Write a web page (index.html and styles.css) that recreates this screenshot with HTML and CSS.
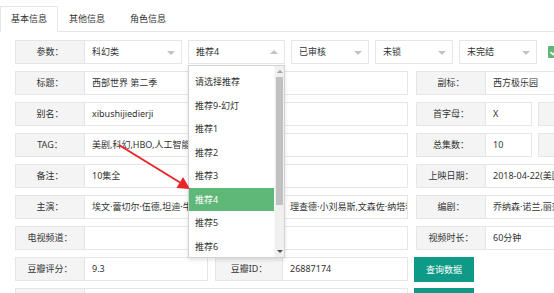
FILE: index.html
```html
<!DOCTYPE html>
<html lang="zh-CN">
<head>
<meta charset="utf-8">
<title>基本信息</title>
<link rel="stylesheet" href="styles.css">
</head>
<body>
<div class="page">
  <div class="tabs">
    <div class="tab active">基本信息</div>
    <div class="tab">其他信息</div>
    <div class="tab tab-wide">角色信息</div>
  </div>

  <div class="form">
    <div class="row">
      <div class="label">参数：</div>
      <div class="select w97 joined">科幻类<i class="caret"></i></div>
      <div class="select w97 open ml6">推荐4<i class="caret up"></i>
        <div class="dropdown">
          <div class="list">
            <div class="item">请选择推荐</div>
            <div class="item">推荐9-幻灯</div>
            <div class="item">推荐1</div>
            <div class="item">推荐2</div>
            <div class="item">推荐3</div>
            <div class="item this">推荐4</div>
            <div class="item">推荐5</div>
            <div class="item">推荐6</div>
            <div class="item">推荐7</div>
          </div>
          <div class="scrollbar">
            <div class="sb-arrow"><i class="sb-up"></i></div>
            <div class="sb-thumb"></div>
            <div class="sb-rest"></div>
            <div class="sb-arrow"><i class="sb-down"></i></div>
          </div>
        </div>
      </div>
      <div class="select w78 ml6">已审核<i class="caret"></i></div>
      <div class="select w78 ml6">未锁<i class="caret"></i></div>
      <div class="select w78 ml6">未完结<i class="caret"></i></div>
      <div class="check">
        <svg viewBox="0 0 12 12" width="12" height="12"><path d="M2.5 6.2 L5 8.5 L9.5 3.5" fill="none" stroke="#fff" stroke-width="1.6"/></svg>
      </div>
    </div>

    <div class="row">
      <div class="label">标题：</div>
      <div class="value w323">西部世界 第二季</div>
      <div class="label ml8">副标：</div>
      <div class="value w120">西方极乐园</div>
    </div>

    <div class="row">
      <div class="label">别名：</div>
      <div class="value w323">xibushijiedierji</div>
      <div class="label ml8">首字母：</div>
      <div class="value w46">X</div>
      <div class="label ml6"></div>
    </div>

    <div class="row">
      <div class="label">TAG：</div>
      <div class="value w323">美剧,科幻,HBO,人工智能,西部</div>
      <div class="label ml8">总集数：</div>
      <div class="value w46">10</div>
      <div class="label ml6"></div>
    </div>

    <div class="row">
      <div class="label">备注：</div>
      <div class="value w323">10集全</div>
      <div class="label ml8">上映日期：</div>
      <div class="value w120">2018-04-22(美国)</div>
    </div>

    <div class="row">
      <div class="label">主演：</div>
      <div class="value w123">埃文·蕾切尔·伍德,坦迪·牛顿,杰弗里·怀特</div>
      <div class="label w68 ml7">导演：</div>
      <div class="value w125">理查德·小刘易斯,文森佐·纳塔利,乔纳森·诺兰</div>
      <div class="label ml8">编剧：</div>
      <div class="value w120">乔纳森·诺兰,丽莎·乔伊</div>
    </div>

    <div class="row">
      <div class="label">电视频道：</div>
      <div class="value w123"></div>
      <div class="label w68 ml7">地区：</div>
      <div class="value w125"></div>
      <div class="label ml8">视频时长：</div>
      <div class="value w120">60分钟</div>
    </div>

    <div class="row">
      <div class="label">豆瓣评分：</div>
      <div class="value w123">9.3</div>
      <div class="label w68 ml7">豆瓣ID：</div>
      <div class="value w125">26887174</div>
      <div class="btn ml6">查询数据</div>
    </div>

    <div class="row">
      <div class="label"></div>
      <div class="value w323"></div>
      <div class="btn ml6"></div>
    </div>
  </div>

  <svg class="arrow" width="554" height="293" viewBox="0 0 554 293">
    <line x1="119" y1="145" x2="180" y2="182.5" stroke="#e8262a" stroke-width="2"/>
    <polygon points="190,189 176.5,188 183,177" fill="#e8262a"/>
  </svg>
</div>
</body>
</html>
```

FILE: styles.css
```css
* {
  box-sizing: border-box;
  margin: 0;
  padding: 0;
}

html,
body {
  margin: 0;
  background: #fff;
}

body {
  font-family: "Noto Sans", "Noto Sans CJK SC", sans-serif;
  font-size: 9px;
  color: #333;
}

.page {
  position: relative;
  width: 554px;
  height: 293px;
  overflow: hidden;
}

/* tabs */
.tabs {
  display: flex;
  height: 32px;
  padding-top: 6px;
  border-bottom: 1px solid #e6e6e6;
}

.tab {
  width: 58px;
  height: 26px;
  line-height: 24px;
  text-align: center;
  border: 1px solid transparent;
  border-bottom: 0;
  flex-shrink: 0;
}

.tab-wide {
  width: 64px;
}

.tab.active {
  position: relative;
  z-index: 1;
  background: #fff;
  border-color: #e6e6e6;
}

/* form */
.form {
  display: flex;
  flex-direction: column;
  gap: 7px;
  padding: 8px 0 0 15px;
}

.row {
  display: flex;
  height: 24px;
  flex-shrink: 0;
}

.label {
  width: 70px;
  height: 24px;
  line-height: 22px;
  text-align: center;
  border: 1px solid #e6e6e6;
  background: #f4f4f4;
  flex-shrink: 0;
  white-space: nowrap;
}

.value {
  height: 24px;
  line-height: 22px;
  padding-left: 7px;
  border: 1px solid #e6e6e6;
  border-left: 0;
  background: #fff;
  white-space: nowrap;
  overflow: hidden;
  flex-shrink: 0;
}

.w46 { width: 46px; }
.w68 { width: 68px; }
.w78 { width: 78px; }
.w97 { width: 97px; }
.w120 { width: 120px; }
.w123 { width: 123px; }
.w125 { width: 125px; }
.w323 { width: 323px; }

.ml6 { margin-left: 6px; }
.ml7 { margin-left: 7px; }
.ml8 { margin-left: 8px; }

/* selects */
.select {
  position: relative;
  height: 24px;
  line-height: 22px;
  padding-left: 7px;
  border: 1px solid #e6e6e6;
  background: #fff;
  flex-shrink: 0;
  white-space: nowrap;
}

.select.joined {
  border-left: 0;
}

.caret {
  position: absolute;
  right: 6px;
  top: 10px;
  width: 0;
  height: 0;
  border-style: solid;
  border-width: 4px 4px 0;
  border-color: #c2c2c2 transparent transparent;
}

.caret.up {
  top: 9px;
  border-width: 0 4px 4px;
  border-color: transparent transparent #c2c2c2;
}

.check {
  width: 12px;
  height: 12px;
  margin-left: 11px;
  align-self: center;
  background: #5fb878;
  border-radius: 1px;
  flex-shrink: 0;
}

.check svg {
  display: block;
}

/* dropdown */
.dropdown {
  position: absolute;
  left: -1px;
  top: 24px;
  z-index: 5;
  width: 97px;
  height: 193px;
  display: flex;
  background: #fff;
  border: 1px solid #d2d2d2;
  box-shadow: 0 2px 4px rgba(0, 0, 0, 0.12);
  overflow: hidden;
}

.list {
  flex: 1;
  padding-top: 4px;
  overflow: hidden;
}

.item {
  height: 23.5px;
  line-height: 23.5px;
  padding-left: 6px;
  white-space: nowrap;
}

.item.this {
  background: #5fb878;
  color: #fff;
}

.scrollbar {
  width: 10px;
  display: flex;
  flex-direction: column;
  background: #f0f0f0;
  border-left: 1px solid #f7f7f7;
}

.sb-arrow {
  height: 11px;
  display: flex;
  align-items: center;
  justify-content: center;
  flex-shrink: 0;
}

.sb-up {
  width: 0;
  height: 0;
  border-style: solid;
  border-width: 0 3px 3px;
  border-color: transparent transparent #a3a3a3;
}

.sb-down {
  width: 0;
  height: 0;
  border-style: solid;
  border-width: 3px 3px 0;
  border-color: #505050 transparent transparent;
}

.sb-thumb {
  height: 128px;
  margin: 0 1px;
  background: #c1c1c1;
  flex-shrink: 0;
}

.sb-rest {
  flex: 1;
}

/* buttons */
.btn {
  width: 60px;
  height: 25px;
  line-height: 25px;
  text-align: center;
  color: #fff;
  background: #0f9a87;
  flex-shrink: 0;
}

/* annotation arrow */
.arrow {
  position: absolute;
  left: 0;
  top: 0;
  z-index: 10;
  pointer-events: none;
}
```
